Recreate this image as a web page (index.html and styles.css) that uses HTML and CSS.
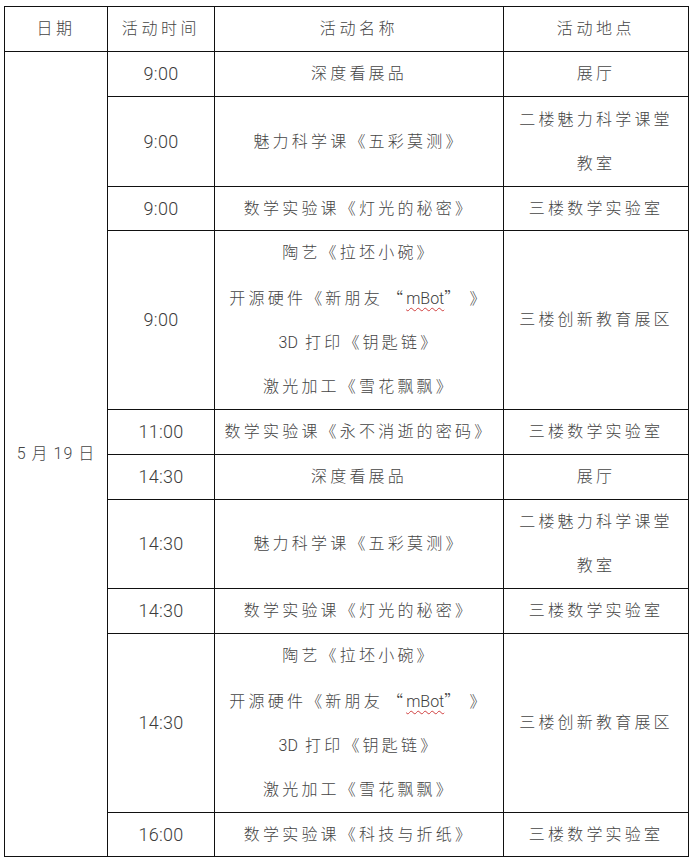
FILE: index.html
```html
<!DOCTYPE html>
<html lang="zh-CN">
<head>
<meta charset="utf-8">
<title>活动安排</title>
<link rel="stylesheet" href="styles.css">
</head>
<body>
<div class="page">
<table class="schedule">
  <colgroup>
    <col class="c-date">
    <col class="c-time">
    <col class="c-name">
    <col class="c-place">
  </colgroup>
  <thead>
    <tr class="h1">
      <th>日期</th>
      <th>活动时间</th>
      <th>活动名称</th>
      <th>活动地点</th>
    </tr>
  </thead>
  <tbody>
    <tr class="h1">
      <td class="date" rowspan="11">5 月 19 日</td>
      <td class="num">9:00</td>
      <td>深度看展品</td>
      <td>展厅</td>
    </tr>
    <tr class="h2">
      <td class="num">9:00</td>
      <td>魅力科学课《五彩莫测》</td>
      <td class="multi">二楼魅力科学课堂<br>教室</td>
    </tr>
    <tr class="h1b">
      <td class="num">9:00</td>
      <td>数学实验课《灯光的秘密》</td>
      <td>三楼数学实验室</td>
    </tr>
    <tr class="h4">
      <td class="num">9:00</td>
      <td class="multi">陶艺《拉坯小碗》<br>开源硬件《新朋友<span class="cjk qo">“</span><span class="spell">mBot</span><span class="cjk qc">”</span>》<br><span class="latin">3D</span> 打印《钥匙链》<br>激光加工《雪花飘飘》</td>
      <td>三楼创新教育展区</td>
    </tr>
    <tr class="h1">
      <td class="num">11:00</td>
      <td>数学实验课《永不消逝的密码》</td>
      <td>三楼数学实验室</td>
    </tr>
    <tr class="h1">
      <td class="num">14:30</td>
      <td>深度看展品</td>
      <td>展厅</td>
    </tr>
    <tr class="h2b">
      <td class="num">14:30</td>
      <td>魅力科学课《五彩莫测》</td>
      <td class="multi">二楼魅力科学课堂<br>教室</td>
    </tr>
    <tr class="h1">
      <td class="num">14:30</td>
      <td>数学实验课《灯光的秘密》</td>
      <td>三楼数学实验室</td>
    </tr>
    <tr class="h4">
      <td class="num">14:30</td>
      <td class="multi">陶艺《拉坯小碗》<br>开源硬件《新朋友<span class="cjk qo">“</span><span class="spell">mBot</span><span class="cjk qc">”</span>》<br><span class="latin">3D</span> 打印《钥匙链》<br>激光加工《雪花飘飘》</td>
      <td>三楼创新教育展区</td>
    </tr>
    <tr class="h1b">
      <td class="num">16:00</td>
      <td>数学实验课《科技与折纸》</td>
      <td>三楼数学实验室</td>
    </tr>
  </tbody>
</table>
</div>
</body>
</html>
```

FILE: styles.css
```css
html, body {
  margin: 0;
  padding: 0;
  background: #fff;
}

.page {
  padding: 6px 0 0 4px;
}

.schedule {
  border-collapse: collapse;
  table-layout: fixed;
  width: 684px;
  font-family: "Roboto", "Noto Sans CJK SC", sans-serif;
  font-size: 16px;
  font-weight: 300;
  color: #454545;
}

.c-date { width: 103px; }
.c-time { width: 107px; }
.c-name { width: 289px; }
.c-place { width: 185px; }

.schedule th,
.schedule td {
  border: 1.5px solid #111;
  padding: 0 2px;
  text-align: center;
  vertical-align: middle;
  font-weight: 300;
  letter-spacing: 3.2px;
  line-height: 22px;
  white-space: nowrap;
}

.schedule th {
  letter-spacing: 3.6px;
}

.schedule td.num {
  font-size: 18px;
  letter-spacing: 0.3px;
  color: #3c3c3c;
}

.schedule td.date {
  letter-spacing: 1px;
}

.schedule td.multi {
  line-height: 44px;
}

.cjk {
  font-family: "Noto Sans CJK SC", sans-serif;
}

.qo {
  margin-left: 4px;
}

.qc {
  margin-right: 14px;
}

.latin {
  letter-spacing: 0;
  color: #3c3c3c;
}

.spell {
  letter-spacing: 0;
  color: #3c3c3c;
  text-decoration: underline wavy #d04040;
  text-decoration-thickness: 1px;
  text-underline-offset: 3px;
}

.h1 { height: 45px; }
.h1b { height: 44px; }
.h2 { height: 90px; }
.h2b { height: 89px; }
.h4 { height: 179px; }
```
